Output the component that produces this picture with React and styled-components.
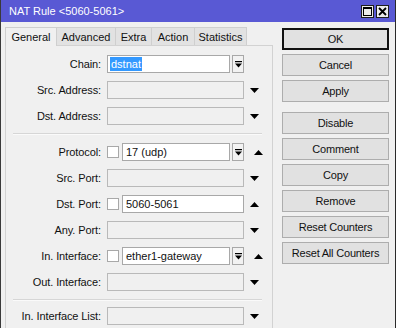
import React from 'react'
import styled, { createGlobalStyle } from 'styled-components'

const GlobalStyle = createGlobalStyle`
  body {
    margin: 0;
    background: #ffffff;
    font-family: 'Liberation Sans', Arial, sans-serif;
  }
`

const Win = styled.div`
  width: 396px;
  height: 328px;
  box-sizing: border-box;
  border-left: 1px solid #3a3a3a;
  border-right: 1px solid #2a2a2a;
  background: #f0f0f0;
  overflow: hidden;
  font-size: 11px;
  color: #111;
`

const TitleBar = styled.div`
  height: 22px;
  background: #5959d4;
  color: #fff;
  display: flex;
  align-items: center;
  justify-content: space-between;
  padding: 0 6px 0 8px;
  font-size: 11px;
`

const TitleButtons = styled.div`
  display: flex;
  gap: 2px;
`

const TitleBtn = styled.div`
  width: 13px;
  height: 13px;
  box-sizing: border-box;
  border: 1px solid #1e1e1e;
  background: #ececec;
  display: flex;
  align-items: center;
  justify-content: center;
`

const Body = styled.div`
  display: flex;
  gap: 9px;
  padding: 5px 0 0 4px;
`

const LeftCol = styled.div`
  width: 268px;
  display: flex;
  flex-direction: column;
`

const Tabs = styled.div`
  display: flex;
  height: 18px;
`

const Tab = styled.div`
  width: ${p => p.$w}px;
  box-sizing: border-box;
  border: 1px solid #cfcfcf;
  border-bottom: none;
  border-left: ${p => (p.$first ? '1px solid #cfcfcf' : 'none')};
  background: ${p => (p.$active ? '#f0f0f0' : '#e2e2e2')};
  display: flex;
  align-items: center;
  justify-content: center;
  margin-bottom: ${p => (p.$active ? '-1px' : '0')};
  position: relative;
  z-index: ${p => (p.$active ? 1 : 0)};
`

const Panel = styled.div`
  border: 1px solid #d2d2d2;
  background: #f0f0f0;
  height: 300px;
  padding-top: 9px;
`

const Row = styled.div`
  display: flex;
  align-items: center;
  height: 18px;
  margin-bottom: 8px;
`

const Label = styled.div`
  width: 95px;
  margin-right: 6px;
  text-align: right;
  white-space: nowrap;
  letter-spacing: -0.1px;
`

const Field = styled.div`
  width: ${p => p.$w}px;
  height: 18px;
  box-sizing: border-box;
  border: 1px solid ${p => (p.$empty ? '#b9b9b9' : '#a8a8a8')};
  background: ${p => (p.$empty ? '#f0f0f0' : '#ffffff')};
  display: flex;
  align-items: center;
  padding-left: 3px;
  white-space: nowrap;
`

const Selected = styled.span`
  background: #3399ff;
  color: #fff;
  padding: 0 1px;
  margin-left: -1px;
  line-height: 14px;
`

const Check = styled.div`
  width: 12px;
  height: 12px;
  box-sizing: border-box;
  border: 1px solid #a8a8a8;
  background: #fff;
  margin-right: 3px;
`

const DropBtn = styled.div`
  width: 12px;
  height: 18px;
  box-sizing: border-box;
  border: 1px solid #a8a8a8;
  background: #f2f2f2;
  margin-left: 2px;
  display: flex;
  align-items: center;
  justify-content: center;
`

const Arrow = styled.div`
  margin-left: ${p => p.$ml}px;
  display: flex;
  align-items: center;
`

const Separator = styled.div`
  height: 1px;
  background: #d6d6d6;
  border-bottom: 1px solid #fafafa;
  margin: 1px 10px ${p => p.$mb}px 7px;
`

const RightCol = styled.div`
  width: 107px;
  padding-top: 1px;
  display: flex;
  flex-direction: column;
  gap: 4px;
`

const Button = styled.div`
  height: 22px;
  box-sizing: border-box;
  border: 1px solid ${p => (p.$default ? '#111' : '#adadad')};
  box-shadow: ${p => (p.$default ? 'inset 0 0 0 1px #111' : 'none')};
  background: #e1e1e1;
  display: flex;
  align-items: center;
  justify-content: center;
  font-size: 11px;
  letter-spacing: -0.2px;
  margin-top: ${p => p.$gapTop || 0}px;
`

const DownIcon = () => (
  <svg width="9" height="5" viewBox="0 0 9 5">
    <polygon points="0,0 9,0 4.5,5" fill="#000" />
  </svg>
)

const UpIcon = () => (
  <svg width="9" height="5" viewBox="0 0 9 5">
    <polygon points="0,5 9,5 4.5,0" fill="#000" />
  </svg>
)

const ListIcon = () => (
  <svg width="7" height="7" viewBox="0 0 7 7">
    <rect x="0" y="0" width="7" height="1.2" fill="#000" />
    <polygon points="0,2.5 7,2.5 3.5,6.5" fill="#000" />
  </svg>
)

const tabs = [
  ['General', 52],
  ['Advanced', 59],
  ['Extra', 36],
  ['Action', 43],
  ['Statistics', 52],
]

const buttons = [
  ['OK', 0, true],
  ['Cancel', 0],
  ['Apply', 0],
  ['Disable', 6],
  ['Comment', 0],
  ['Copy', 0],
  ['Remove', 0],
  ['Reset Counters', 0],
  ['Reset All Counters', 0],
]

// one row of the rule form: optional "!" checkbox, value box, list button, trailing arrow
function FormRow({ label, value, check, list, arrow, selected }) {
  let w = 137
  if (check) w -= 15
  if (list) w -= 14
  return (
    <Row>
      <Label>{label}</Label>
      {check && <Check />}
      <Field $w={w} $empty={!value}>
        {selected ? <Selected>{value}</Selected> : value}
      </Field>
      {list && <DropBtn><ListIcon /></DropBtn>}
      {arrow && (
        <Arrow $ml={list ? 10 : 6}>
          {arrow === 'up' ? <UpIcon /> : <DownIcon />}
        </Arrow>
      )}
    </Row>
  )
}

export default function App() {
  return (
    <>
      <GlobalStyle />
      <Win>
        <TitleBar>
          <span>NAT Rule &lt;5060-5061&gt;</span>
          <TitleButtons>
            <TitleBtn>
              <svg width="9" height="9" viewBox="0 0 9 9">
                <rect x="0.5" y="0.5" width="8" height="8" fill="none" stroke="#000" />
                <rect x="0.5" y="0.5" width="8" height="1.5" fill="#000" />
              </svg>
            </TitleBtn>
            <TitleBtn>
              <svg width="9" height="9" viewBox="0 0 9 9">
                <path d="M1 1 L8 8 M8 1 L1 8" stroke="#000" strokeWidth="1.8" />
              </svg>
            </TitleBtn>
          </TitleButtons>
        </TitleBar>
        <Body>
          <LeftCol>
            <Tabs>
              {tabs.map(([name, w], i) => (
                <Tab key={name} $w={w} $first={i === 0} $active={i === 0}>{name}</Tab>
              ))}
            </Tabs>
            <Panel>
              <FormRow label="Chain:" value="dstnat" list selected />
              <FormRow label="Src. Address:" arrow="down" />
              <FormRow label="Dst. Address:" arrow="down" />
              <Separator $mb={8} />
              <FormRow label="Protocol:" value="17 (udp)" check list arrow="up" />
              <FormRow label="Src. Port:" arrow="down" />
              <FormRow label="Dst. Port:" value="5060-5061" check arrow="up" />
              <FormRow label="Any. Port:" arrow="down" />
              <FormRow label="In. Interface:" value="ether1-gateway" check list arrow="up" />
              <FormRow label="Out. Interface:" arrow="down" />
              <Separator $mb={6} />
              <FormRow label="In. Interface List:" arrow="down" />
            </Panel>
          </LeftCol>
          <RightCol>
            {buttons.map(([name, gap, def]) => (
              <Button key={name} $default={def} $gapTop={gap}>{name}</Button>
            ))}
          </RightCol>
        </Body>
      </Win>
    </>
  )
}
